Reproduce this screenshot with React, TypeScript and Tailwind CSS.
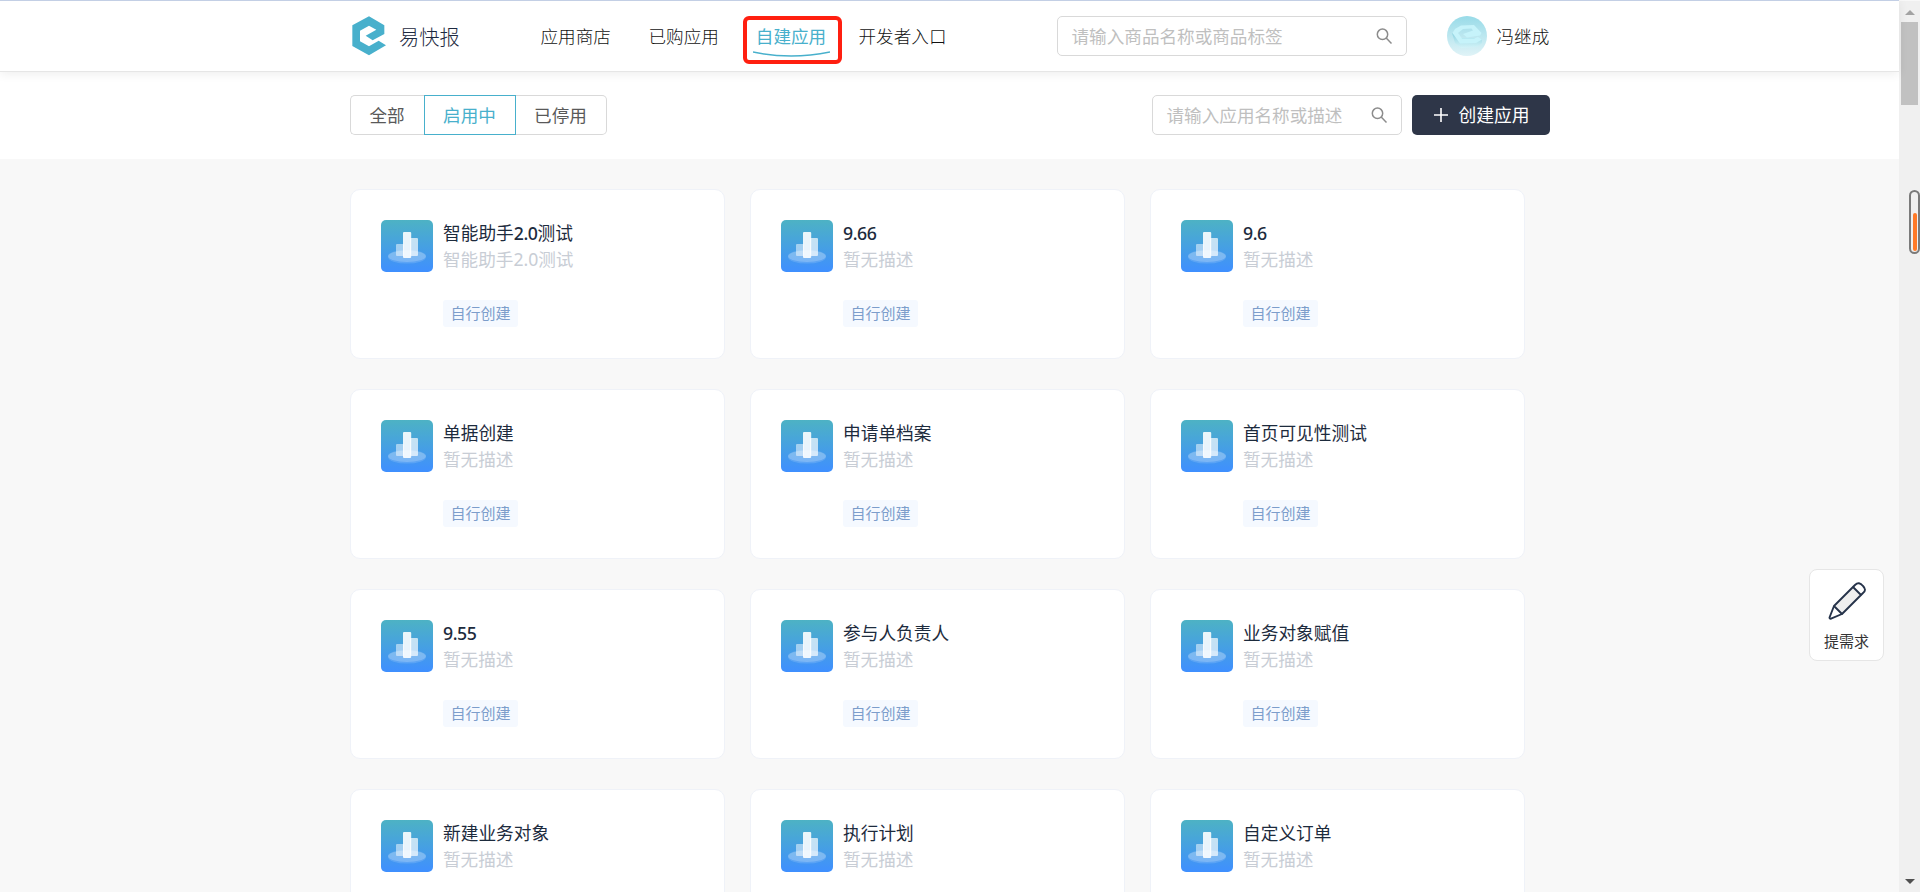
import React from "react";

const apps = [
  { name: "智能助手2.0测试", desc: "智能助手2.0测试", tag: "自行创建" },
  { name: "9.66", desc: "暂无描述", tag: "自行创建" },
  { name: "9.6", desc: "暂无描述", tag: "自行创建" },
  { name: "单据创建", desc: "暂无描述", tag: "自行创建" },
  { name: "申请单档案", desc: "暂无描述", tag: "自行创建" },
  { name: "首页可见性测试", desc: "暂无描述", tag: "自行创建" },
  { name: "9.55", desc: "暂无描述", tag: "自行创建" },
  { name: "参与人负责人", desc: "暂无描述", tag: "自行创建" },
  { name: "业务对象赋值", desc: "暂无描述", tag: "自行创建" },
  { name: "新建业务对象", desc: "暂无描述" },
  { name: "执行计划", desc: "暂无描述" },
  { name: "自定义订单", desc: "暂无描述" },
];

function Logo() {
  return (
    <svg className="h-10 w-[34px]" viewBox="37 48 102 120" fill="#48b0cc">
      <path d="M88 49 134 76V102L99 121 78 107 110 89 88 77 61 92V124L88 139 117 122 139 136 88 166 38 138V76Z" />
    </svg>
  );
}

function SearchIcon() {
  return (
    <svg className="size-4 shrink-0" viewBox="0 0 16 16" fill="none" stroke="#8c8c8c" strokeWidth="1.5">
      <circle cx="6.5" cy="6.3" r="5.2" />
      <path d="M10.2 10 15.5 15.5" />
    </svg>
  );
}

function Avatar() {
  return (
    <svg className="size-10" viewBox="0 0 40 40">
      <defs>
        <linearGradient id="avatarBg" x1="0" y1="0" x2="0" y2="1">
          <stop offset="0" stopColor="#98dbe8" />
          <stop offset="1" stopColor="#e0f3f7" />
        </linearGradient>
        <linearGradient id="avatarSide" x1="0" y1="0" x2="0" y2="1">
          <stop offset="0" stopColor="#8fd3e1" />
          <stop offset="1" stopColor="#d3f3f8" />
        </linearGradient>
      </defs>
      <circle cx="20" cy="20" r="20" fill="url(#avatarBg)" />
      <path d="M5 17 8 27 14 32 30 31 35 27 35 23 29 22 14 22Z" fill="url(#avatarSide)" />
      <path
        d="M14 9.5 27 9 34.5 17 33 19.5 20 21.5 16 18 26 14.5 24.5 12.5 16 13 11 17 15 22.5 27 22.5 31 21 35 23.5 29 27 13 27.5 5.5 17 8 13Z"
        fill="#c6f3fa"
      />
    </svg>
  );
}

function AppIcon() {
  return (
    <svg className="size-[52px] shrink-0" viewBox="0 0 52 52">
      <defs>
        <linearGradient id="appBg" x1="0" y1="0" x2="0" y2="1">
          <stop offset="0" stopColor="#4db2c4" />
          <stop offset="1" stopColor="#3f8fff" />
        </linearGradient>
      </defs>
      <rect width="52" height="52" rx="5" fill="url(#appBg)" />
      <ellipse cx="26" cy="37" rx="19" ry="6.6" fill="#fff" opacity=".14" />
      <ellipse cx="26" cy="36" rx="19" ry="6" fill="#fff" opacity=".2" />
      <rect x="15" y="24" width="8" height="12" rx="1" fill="#fff" opacity=".5" />
      <rect x="29" y="18" width="8" height="18" rx="1" fill="#fff" opacity=".68" />
      <rect x="22" y="12" width="8.2" height="26" rx="1" fill="#fff" opacity=".88" />
    </svg>
  );
}

function Title({ text }: { text: string }) {
  return (
    <div className="h-[26px] text-[17.7px] leading-[26px] whitespace-nowrap text-[#1d2b3d]">
      {text.split(/([\d.]+)/).map((part, i) =>
        i % 2 === 1 ? (
          <span key={i} className="font-medium tracking-[-0.45px]">
            {part}
          </span>
        ) : (
          part
        ),
      )}
    </div>
  );
}

function AppCard({ name, desc, tag }: { name: string; desc: string; tag?: string }) {
  return (
    <div className="flex h-[170px] gap-2.5 rounded-[10px] border border-[#eff2f8] bg-white pt-[30px] pl-[30px]">
      <AppIcon />
      <div className="flex flex-col items-start">
        <Title text={name} />
        <div className="h-[26px] text-[17.6px] leading-[26px] text-[#c8cdd5]">{desc}</div>
        {tag && (
          <div className="mt-7 h-[27px] rounded-[3px] bg-[#f5f9ff] px-[7.5px] text-[15px] leading-[27px] text-[#7c9dcb]">
            {tag}
          </div>
        )}
      </div>
    </div>
  );
}

export default function App() {
  return (
    <div className="relative flex h-[892px] w-[1920px] overflow-hidden bg-[#f8f8f8] font-['Noto_Sans','Noto_Sans_CJK_SC',sans-serif] text-[17.6px] text-[#333]">
      <div className="flex w-[1899px] flex-col">
        <header className="z-10 flex h-[72px] shrink-0 justify-center border-t border-b border-t-[#c3cfe5] border-b-[#e6e6e6] bg-white shadow-[0_2px_10px_rgba(0,0,0,0.07)]">
          <div className="flex w-[1200px] items-center">
            <div className="flex w-[190px] items-center gap-[13px] pl-[2.5px] text-[20.2px] font-light text-[#1c2940]">
              <Logo />
              <span className="pt-0.5">易快报</span>
            </div>
            <nav className="flex h-full flex-1 items-center font-light text-[#111]">
              <a className="w-[108px] pl-px">应用商店</a>
              <a className="w-[95px] pl-px">已购应用</a>
              <div className="mt-[7px] flex h-12 w-[99px] flex-col items-center rounded-[6px] border-4 border-[#ff1f10] pt-[3px] font-normal text-[#48b0cc]">
                <span className="mr-0.5 leading-[26px]">自建应用</span>
                <svg className="mt-0.5 mr-0.5 h-[7px] w-[77px] shrink-0" viewBox="0 0 77 7" fill="none" stroke="#48b0cc" strokeWidth="1.5">
                  <path d="M0 1Q38 9 77 1" />
                </svg>
              </div>
              <a className="pl-[17px]">开发者入口</a>
            </nav>
            <div className="flex h-10 w-[350px] items-center justify-between rounded-[5px] border border-[#d9d9d9] pr-3.5 pl-3.5 text-[#bfbfbf]">
              <span>请输入商品名称或商品标签</span>
              <SearchIcon />
            </div>
            <div className="ml-10 flex w-[103px] items-center gap-2.5 font-light whitespace-nowrap text-[#111]">
              <Avatar />
              <span>冯继成</span>
            </div>
          </div>
        </header>

        <section className="flex h-[87px] shrink-0 justify-center bg-white pt-[23px]">
          <div className="flex h-10 w-[1200px] items-center justify-between text-[#595959]">
            <div className="flex h-10 text-center leading-[38px]">
              <div className="w-[74px] rounded-l-[5px] border border-r-0 border-[#d9d9d9]">全部</div>
              <div className="w-[92px] border border-[#48b0cc] text-[#48b0cc]">启用中</div>
              <div className="w-[91px] rounded-r-[5px] border border-l-0 border-[#d9d9d9]">已停用</div>
            </div>
            <div className="flex gap-2.5">
              <div className="flex h-10 w-[250px] items-center justify-between rounded-[5px] border border-[#d9d9d9] pr-3.5 pl-3.5 text-[#bfbfbf]">
                <span>请输入应用名称或描述</span>
                <SearchIcon />
              </div>
              <button className="flex h-10 w-[138px] items-center gap-[11px] rounded-[5px] bg-[#2e3648] pl-[22px] text-[17.8px] text-white">
                <svg className="size-3.5" viewBox="0 0 14 14" stroke="#fff" strokeWidth="1.6">
                  <path d="M7 0V14M0 7H14" />
                </svg>
                <span>创建应用</span>
              </button>
            </div>
          </div>
        </section>

        <main className="flex justify-center pt-[30px]">
          <div className="grid w-[1199px] grid-cols-[375px_375px_375px] gap-x-[25px] gap-y-[30px]">
            {apps.map((app) => (
              <AppCard key={app.name} name={app.name} desc={app.desc} tag={app.tag} />
            ))}
          </div>
        </main>
      </div>

      <div className="mt-px flex w-[21px] flex-col items-center bg-[#f0f0f0]">
        <svg className="mt-[9px] h-[5px] w-2.5" viewBox="0 0 10 5" fill="#a3a3a3">
          <path d="M0 5 5 0 10 5Z" />
        </svg>
        <div className="mt-[7px] h-[83px] w-[17px] bg-[#c1c1c1]" />
        <svg className="mt-auto mb-2 h-[5px] w-2.5" viewBox="0 0 10 5" fill="#505050">
          <path d="M0 0H10L5 5Z" />
        </svg>
      </div>

      <div className="absolute top-[190px] right-0 flex h-16 w-[11px] flex-col justify-end rounded-full border-2 border-[#7a7a7a] bg-[#f0f0f0] px-[1.5px] pb-px">
        <div className="h-[38px] rounded-full bg-[#ff7a28]" />
      </div>

      <div className="absolute top-[569px] left-[1809px] flex h-[92px] w-[75px] flex-col items-center rounded-lg border border-[#e6e6e6] bg-white pt-3 text-[15px]">
        <svg className="h-[38px] w-[38px]" viewBox="0 0 38 38" fill="none" stroke="#26334a" strokeWidth="1.9" strokeLinejoin="round">
          <path d="M6 24 25 5 33 13 14 32Z" fill="#efefef" />
          <path d="M25 5 27 3Q31-1 35 4 39 8 35 11L33 13" />
          <path d="M6 24 1.5 35.5Q1.5 37 3 36.7L14 32" />
        </svg>
        <span className="mt-[9px] leading-6">提需求</span>
      </div>
    </div>
  );
}
